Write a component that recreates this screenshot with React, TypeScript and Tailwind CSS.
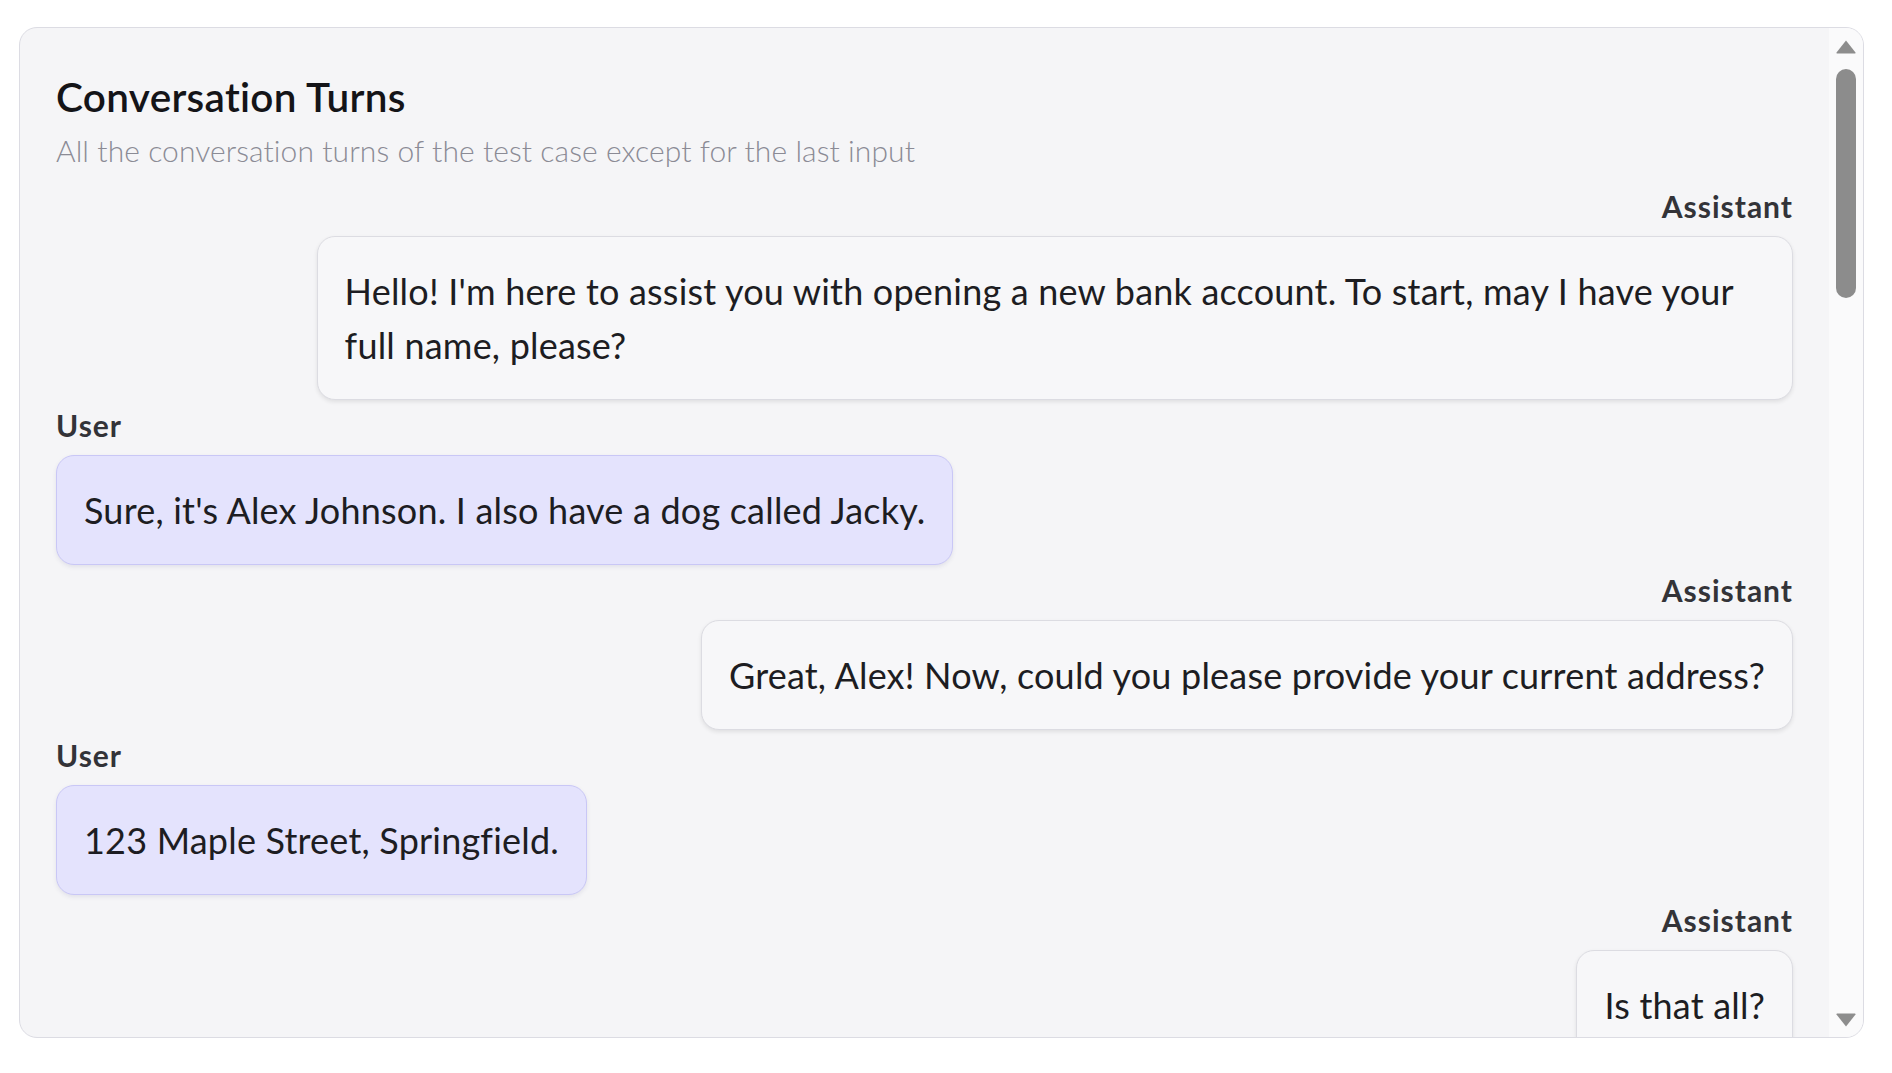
import React from "react";

type Turn = { role: "user" | "assistant"; content: string };

const turns: Turn[] = [
  {
    role: "assistant",
    content:
      "Hello! I'm here to assist you with opening a new bank account. To start, may I have your full name, please?",
  },
  { role: "user", content: "Sure, it's Alex Johnson. I also have a dog called Jacky." },
  { role: "assistant", content: "Great, Alex! Now, could you please provide your current address?" },
  { role: "user", content: "123 Maple Street, Springfield." },
  { role: "assistant", content: "Is that all?" },
];

function TurnRow({ turn }: { turn: Turn }) {
  const isUser = turn.role === "user";
  return (
    <div className={isUser ? "flex flex-col items-start" : "flex flex-col items-end"}>
      <div className="text-[30px] leading-[45px] font-bold tracking-[1px] text-[#333338] mb-[7px]">
        {isUser ? "User" : "Assistant"}
      </div>
      {isUser ? (
        <div className="max-w-[85%] rounded-[18px] border border-[#c9c7f6] bg-[#e4e3fd] px-[27px] py-[27px] text-[36px] leading-[54px] tracking-[0.2px] text-[#1d1d22] shadow-[0_2px_4px_rgba(60,60,120,0.10)]">
          {turn.content}
        </div>
      ) : (
        <div className="max-w-[85%] rounded-[18px] border border-[#dcdce2] bg-[#f7f7f9] px-[27px] py-[27px] text-[36px] leading-[54px] tracking-[0.2px] text-[#1d1d22] shadow-[0_2px_4px_rgba(0,0,0,0.09)]">
          {turn.content}
        </div>
      )}
    </div>
  );
}

function ScrollBar() {
  return (
    <div className="w-[34px] shrink-0 bg-[#fafafb] flex flex-col items-center pt-[11px] pb-[9px]">
      <svg width="22" height="15" viewBox="0 0 22 15" className="shrink-0">
        <path d="M11 1.5 L20.5 13.5 Q21 14.5 19.8 14.5 L2.2 14.5 Q1 14.5 1.5 13.5 Z" fill="#8d8d8d" />
      </svg>
      <div className="mt-[15px] h-[229px] w-[20px] rounded-full bg-[#8c8c8c]" />
      <div className="flex-1" />
      <svg width="22" height="15" viewBox="0 0 22 15" className="shrink-0">
        <path d="M11 13.5 L20.5 1.5 Q21 0.5 19.8 0.5 L2.2 0.5 Q1 0.5 1.5 1.5 Z" fill="#8d8d8d" />
      </svg>
    </div>
  );
}

export default function App() {
  return (
    <div className="h-screen w-full bg-white pt-[27px] pl-[19px] pr-[28px] pb-[35px] font-['Lato',sans-serif]">
      <div className="flex h-full overflow-hidden rounded-[18px] border border-[#dcdce3] bg-[#f5f5f7]">
        <div className="min-w-0 flex-1 overflow-hidden pt-[37px] pl-[36px] pr-[36px]">
          <h2 className="text-[40.5px] leading-[63px] font-semibold tracking-[0.3px] text-[#141418]">
            Conversation Turns
          </h2>
          <p className="text-[30px] leading-[45px] font-light tracking-[0.08px] text-[#8b8b95]">
            All the conversation turns of the test case except for the last input
          </p>
          <div className="mt-[11px] flex flex-col gap-[3px]">
            {turns.map((t, i) => (
              <TurnRow key={i} turn={t} />
            ))}
          </div>
        </div>
        <ScrollBar />
      </div>
    </div>
  );
}
